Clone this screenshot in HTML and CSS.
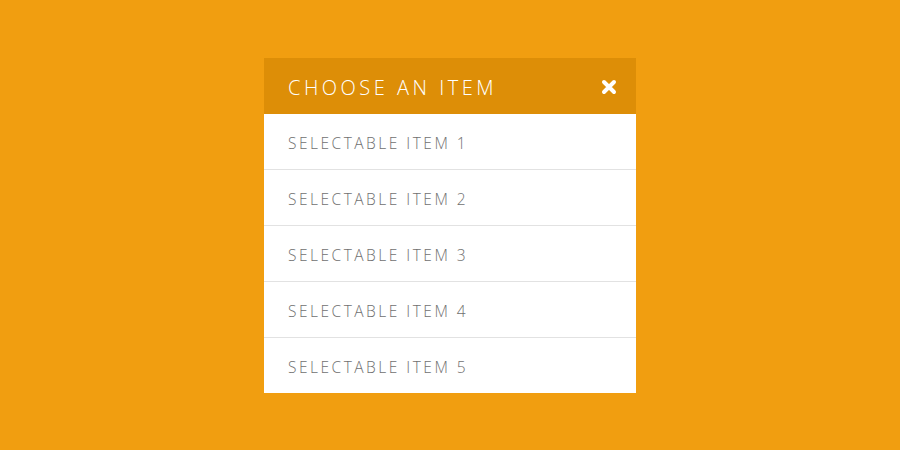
FILE: index.html
```html
<!DOCTYPE html>
<html>
<head>
<meta charset="utf-8">
<link rel="stylesheet" href="styles.css">
</head>
<body>
<div class="stage">
  <div class="dialog">
    <div class="header">
      <span class="title">CHOOSE AN ITEM</span>
      <svg class="close" width="16" height="16" viewBox="0 0 16 16"><path d="M3 3 L13 13 M13 3 L3 13" stroke="#fff" stroke-width="4" stroke-linecap="round"/></svg>
    </div>
    <ul class="list">
      <li class="item">SELECTABLE ITEM 1</li>
      <li class="item">SELECTABLE ITEM 2</li>
      <li class="item">SELECTABLE ITEM 3</li>
      <li class="item">SELECTABLE ITEM 4</li>
      <li class="item">SELECTABLE ITEM 5</li>
    </ul>
  </div>
</div>
</body>
</html>
```
FILE: styles.css
```css
html, body {
  margin: 0;
  padding: 0;
}
body {
  background: #f19e10;
  font-family: "Open Sans", "Liberation Sans", sans-serif;
  font-weight: 300;
}
.stage {
  width: 900px;
  height: 450px;
  display: flex;
  justify-content: center;
  padding-top: 58px;
  box-sizing: border-box;
}
.dialog {
  width: 372px;
  align-self: flex-start;
  background: #fff;
}
.header {
  height: 56px;
  background: #dd8e07;
  display: flex;
  align-items: center;
  justify-content: space-between;
  padding: 2px 19px 0 24px;
  box-sizing: border-box;
}
.title {
  color: #fff;
  font-size: 20px;
  letter-spacing: 3.5px;
  font-weight: 300;
}
.close {
  display: block;
}
.list {
  list-style: none;
  margin: 0;
  padding: 0;
}
.item {
  height: 55px;
  display: flex;
  align-items: center;
  padding: 2px 0 0 24px;
  box-sizing: border-box;
  color: #707070;
  font-size: 15.5px;
  letter-spacing: 2.5px;
}
.item + .item {
  height: 56px;
  border-top: 1px solid #e2e2e2;
}
```
